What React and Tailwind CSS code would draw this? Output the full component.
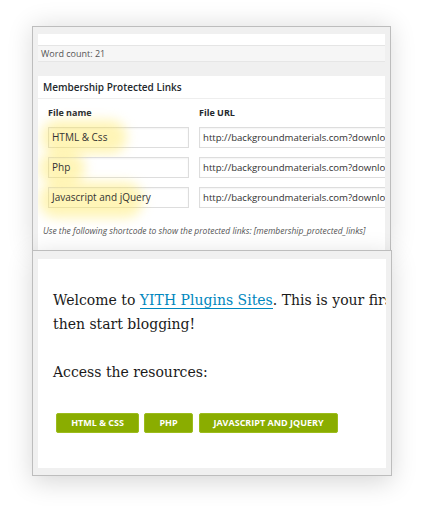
import React from 'react';

const rows = [
  { name: 'HTML & Css', glow: 'left-[-8px] top-[-8px] w-[86px] h-[34px]' },
  { name: 'Php', glow: 'left-[-10px] top-[-6px] w-[46px] h-[32px]' },
  { name: 'Javascript and jQuery', glow: 'left-[-10px] top-[-6px] w-[104px] h-[36px]' },
];

const url = 'http://backgroundmaterials.com?download=1234&file=resources';

export default function App() {
  return (
    <div className="w-[421px] h-[525px] bg-white overflow-hidden pt-[26px] pl-[32px]" style={{ fontFamily: '"Open Sans", sans-serif' }}>
      {/* --- admin panel --- */}
      <div className="relative w-[359px] h-[225px] border border-[#bdbdbd] bg-[#f0f0f0] pt-[7px] px-[5px] overflow-hidden shadow-[0_0_24px_rgba(0,0,0,0.14)]">
        <div className="h-[12px] bg-white border-b border-[#e5e5e5]" />
        <div className="h-[16px] bg-[#f6f6f6] border-b border-[#e6e6e6] pl-[3px] text-[9px] leading-[16px] text-[#555]">
          Word count: 21
        </div>
        <div className="mt-[14px] bg-white h-[200px] overflow-hidden">
          <div className="h-[23px] border-b border-[#eee] pl-[5px] text-[10px] leading-[23px] font-semibold text-[#23282d]">
            Membership Protected Links
          </div>
          <div className="pl-[10px] pt-[8px]">
            <div className="flex text-[9px] font-bold text-[#23282d] leading-[12px]">
              <div className="w-[151px] shrink-0">File name</div>
              <div>File URL</div>
            </div>
            <div className="mt-[8px] flex flex-col gap-[9px]">
              {rows.map((r) => (
                <div key={r.name} className="flex gap-[10px]">
                  <div className="relative shrink-0 w-[141px] h-[21px] border border-[#ddd] bg-white shadow-[inset_0_1px_2px_rgba(0,0,0,0.05)] text-[10px] leading-[19px]">
                    <div className={`absolute ${r.glow} rounded-full bg-[#ffe54a]/40 blur-[6px] pointer-events-none`} />
                    <span className="relative pl-[3px] text-[#333]">{r.name}</span>
                  </div>
                  <div className="shrink-0 w-[240px] h-[21px] border border-[#ddd] bg-white shadow-[inset_0_1px_2px_rgba(0,0,0,0.05)] pl-[3px] text-[9.6px] leading-[19px] text-[#333] whitespace-nowrap overflow-hidden">
                    {url}
                  </div>
                </div>
              ))}
            </div>
            <p className="mt-[17px] -ml-[5px] text-[8.5px] italic text-[#555] whitespace-nowrap">
              Use the following shortcode to show the protected links: [membership_protected_links]
            </p>
          </div>
        </div>
      </div>

      {/* --- front end panel --- */}
      <div className="relative w-[360px] h-[226px] -mt-px border border-[#bdbdbd] bg-[#f0f0f0] pt-[8px] pb-[7px] px-[5px] shadow-[0_6px_24px_rgba(0,0,0,0.16)]">
        <div className="h-full bg-white overflow-hidden pl-[15px] pt-[29px]" style={{ fontFamily: '"DejaVu Serif", serif' }}>
          <p className="text-[14px] leading-[24px] text-[#1a1a1a] whitespace-nowrap">
            Welcome to <span className="text-[#0087be] border-b border-[#0087be]">YITH Plugins Sites</span>. This is your first post. Edit or delete it,
          </p>
          <p className="text-[14px] leading-[24px] text-[#1a1a1a]">then start blogging!</p>
          <p className="mt-[24px] text-[14px] leading-[24px] text-[#1a1a1a]">Access the resources:</p>
          <div className="mt-[29px] flex gap-[5px] ml-[3px]" style={{ fontFamily: '"Open Sans", sans-serif' }}>
            {['HTML & CSS', 'PHP', 'JAVASCRIPT AND JQUERY'].map((b, i) => (
              <div
                key={b}
                className={`h-[20px] rounded-[2px] bg-[#8aad00] border border-[#9cbc1c] text-white text-[9px] font-bold leading-[18px] text-center ${i === 0 ? 'w-[83px]' : i === 1 ? 'w-[49px]' : 'w-[139px] ml-[1px]'}`}
              >
                {b}
              </div>
            ))}
          </div>
        </div>
      </div>
    </div>
  );
}
